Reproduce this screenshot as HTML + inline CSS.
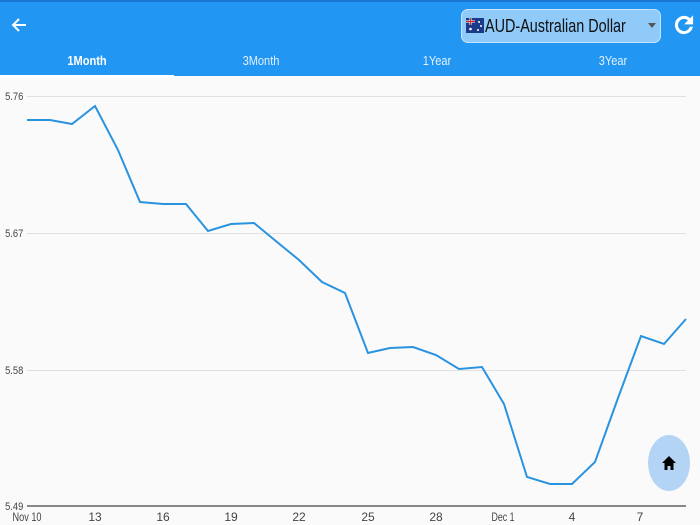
<!DOCTYPE html>
<html><head><meta charset="utf-8"><style>
body{margin:0;width:700px;height:525px;background:#fafafa;font-family:"Liberation Sans",sans-serif;overflow:hidden;position:relative}
.hdr{position:absolute;left:0;top:0;width:700px;height:76px;background:#2196F3;border-top:2px solid #1976D2;box-sizing:border-box}
.tab{position:absolute;top:51px;width:174px;text-align:center;color:#e3f0fd;font-size:13px;transform:scaleX(0.85)}
.tab.a{color:#fff;font-weight:bold}
.ind{position:absolute;left:0;top:73px;width:174px;height:3px;background:#fff}
.dd{position:absolute;left:461px;top:7px;width:200px;height:34px;border:1px solid #c8e4fb;border-radius:7px;background:#90CAF9;box-sizing:border-box}
.dd span{position:absolute;left:23px;top:6px;font-size:18px;color:#111;transform:scaleX(0.8);transform-origin:0 0;white-space:nowrap}
</style></head><body>
<div class="hdr">
<svg style="position:absolute;left:10px;top:14px" width="18" height="18" viewBox="0 0 18 18"><path d="M16 9H3M9 3L3 9l6 6" stroke="#fff" stroke-width="2" fill="none"/></svg>
<div class="dd">
<svg style="position:absolute;left:4px;top:8px" width="18" height="15" viewBox="0 0 18 15"><rect width="18" height="15" fill="#1a3a8a"/><path d="M0 3.5h9M4.5 0v7" stroke="#fff" stroke-width="2"/><path d="M0 3.5h9M4.5 0v7" stroke="#d22" stroke-width="1"/><circle cx="4.5" cy="11" r="1.3" fill="#fff"/><circle cx="13" cy="4" r="1" fill="#fff"/><circle cx="15" cy="8" r="1" fill="#fff"/><circle cx="12" cy="12" r="1" fill="#fff"/></svg>
<span>AUD-Australian Dollar</span>
<svg style="position:absolute;left:186px;top:13px" width="8" height="5"><path d="M0 0h8L4 5z" fill="#555"/></svg>
</div>
<svg style="position:absolute;left:671px;top:10px" width="26" height="26" viewBox="0 0 24 24"><path d="M17.65 6.35A7.958 7.958 0 0 0 12 4a8 8 0 1 0 7.73 10h-2.08A6 6 0 1 1 12 6c1.66 0 3.14.69 4.22 1.78L13 11h7V4l-2.35 2.35z" fill="#fff" stroke="#fff" stroke-width="0.8"/></svg>
<div class="tab a" style="left:0">1Month</div>
<div class="tab" style="left:174px">3Month</div>
<div class="tab" style="left:350px">1Year</div>
<div class="tab" style="left:526px">3Year</div>
<div class="ind"></div>
</div>
<svg style="position:absolute;left:0;top:0" width="700" height="525">
<g stroke="#e0e0e0" stroke-width="1"><line x1="27" y1="96.5" x2="686" y2="96.5"/><line x1="27" y1="233.5" x2="686" y2="233.5"/><line x1="27" y1="370.5" x2="686" y2="370.5"/></g>
<line x1="27" y1="506" x2="686" y2="506" stroke="#888" stroke-width="2"/>
<polyline fill="none" stroke="#2a93e0" stroke-width="2" points="27,120 50,120 72,124 95,106 118,150 140,202 163,204 186,204 208,231 231,224 254,223 277,242 299,260 322,282 345,293 368,353 390,348 413,347 436,355 459,369 482,367 504,404 527,477 550,484 572,484 595,462 618,398 641,336 664,344 686,319"/>
<g fill="#444" font-size="11" font-family="Liberation Sans"><g transform="scale(0.85,1)"><text x="6" y="100">5.76</text><text x="6" y="237">5.67</text><text x="6" y="374">5.58</text><text x="6" y="510">5.49</text></g>
<g text-anchor="middle" font-size="12"><text x="27" y="521" textLength="29" lengthAdjust="spacingAndGlyphs">Nov 10</text><text x="95" y="521">13</text><text x="163" y="521">16</text><text x="231" y="521">19</text><text x="299" y="521">22</text><text x="368" y="521">25</text><text x="436" y="521">28</text><text x="503" y="521" textLength="23" lengthAdjust="spacingAndGlyphs">Dec 1</text><text x="572" y="521">4</text><text x="640" y="521">7</text></g></g>
<ellipse cx="669" cy="463" rx="21" ry="28" fill="#b3d4f5"/>
<path d="M669 456l-7 7h2.5v7h3v-4h3v4h3v-7h2.5z" fill="#000"/>
</svg>
</body></html>
